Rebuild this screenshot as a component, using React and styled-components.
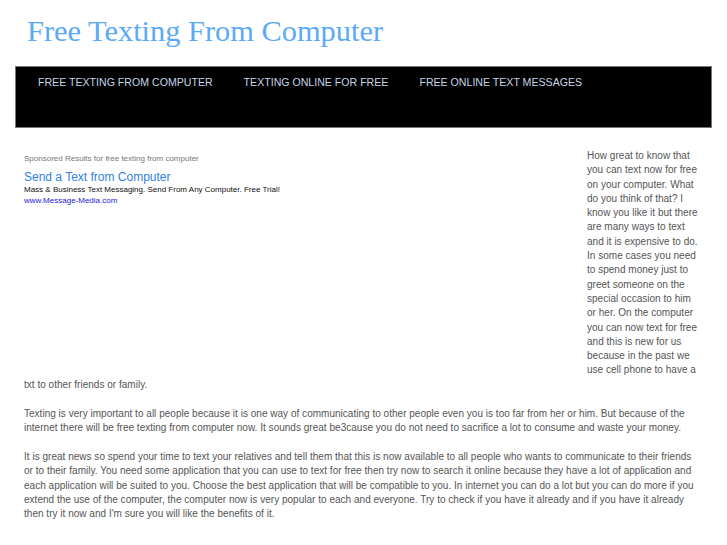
import styled, { createGlobalStyle } from "styled-components";

const GlobalStyle = createGlobalStyle`
  html, body {
    margin: 0;
    padding: 0;
    background: #fff;
  }
`;

const navItems = [
  "Free Texting From Computer",
  "Texting Online For Free",
  "Free Online Text Messages",
];

const App = () => {
  return (
    <Page>
      <GlobalStyle />
      <Header>
        <SiteTitle>Free Texting From Computer</SiteTitle>
      </Header>
      <Nav>
        {navItems.map((item) => (
          <NavLink key={item} href="#">
            {item}
          </NavLink>
        ))}
      </Nav>
      <Content>
        <Para>
          <AdBlock>
            <AdLabel>Sponsored Results for free texting from computer</AdLabel>
            <AdTitle href="#">Send a Text from Computer</AdTitle>
            <AdText>Mass &amp; Business Text Messaging. Send From Any Computer. Free Trial!</AdText>
            <AdUrl href="#">www.Message-Media.com</AdUrl>
          </AdBlock>
          How great to know that you can text now for free on your computer. What do you
          think of that? I know you like it but there are many ways to text and it is
          expensive to do. In some cases you need to spend money just to greet someone on
          the special occasion to him or her. On the computer you can now text for free and
          this is new for us because in the past we use cell phone to have a txt to other
          friends or family.
        </Para>
        <Para>
          Texting is very important to all people because it is one way of communicating to
          other people even you is too far from her or him. But because of the internet there
          will be free texting from computer now. It sounds great be3cause you do not need to
          sacrifice a lot to consume and waste your money.
        </Para>
        <Para>
          It is great news so spend your time to text your relatives and tell them that this is
          now available to all people who wants to communicate to their friends or to their
          family. You need some application that you can use to text for free then try now to
          search it online because they have a lot of application and each application will be
          suited to you. Choose the best application that will be compatible to you. In internet
          you can do a lot but you can do more if you extend the use of the computer, the
          computer now is very popular to each and everyone. Try to check if you have it already
          and if you have it already then try it now and I'm sure you will like the benefits of
          it.
        </Para>
      </Content>
    </Page>
  );
};

const Page = styled.div`
  width: 727px;
`;

const Header = styled.header`
  height: 66px;
  padding-left: 27px;
  box-sizing: border-box;
`;

const SiteTitle = styled.h1`
  margin: 0;
  padding-top: 13px;
  font-family: "Liberation Serif", "Times New Roman", serif;
  font-weight: normal;
  font-size: 30.4px;
  line-height: 36px;
  color: #5aaaf8;
`;

const Nav = styled.nav`
  margin: 0 15px;
  height: 62px;
  box-sizing: border-box;
  background: #000;
  border: 1px solid #777;
  display: flex;
  align-items: flex-start;
  padding: 8px 0 0 6.5px;
`;

const NavLink = styled.a`
  padding: 0 15.5px;
  font-family: "Liberation Sans", Arial, sans-serif;
  font-size: 10.6px;
  line-height: 14px;
  text-transform: uppercase;
  text-decoration: none;
  color: #c5d5e6;
`;

const Content = styled.main`
  padding: 21px 28px 0 24px;
  font-family: "Liberation Sans", Arial, sans-serif;
  font-size: 10px;
  letter-spacing: 0.02px;
  line-height: 14.3px;
  color: #555;
`;

const Para = styled.p`
  margin: 0 0 14.7px;
`;

const AdBlock = styled.div`
  float: left;
  width: 553px;
  height: 221px;
  margin-right: 10px;
  letter-spacing: 0;
`;

const AdLabel = styled.div`
  margin-top: 3px;
  font-size: 8px;
  line-height: 14px;
  color: #777;
`;

const AdTitle = styled.a`
  display: block;
  margin-top: 4px;
  font-size: 12px;
  line-height: 14px;
  color: #2f7fe6;
  text-decoration: none;
`;

const AdText = styled.div`
  font-size: 8px;
  line-height: 11px;
  color: #111;
`;

const AdUrl = styled.a`
  display: block;
  font-size: 8px;
  line-height: 11px;
  color: #2222dd;
  text-decoration: none;
`;

export default App;
